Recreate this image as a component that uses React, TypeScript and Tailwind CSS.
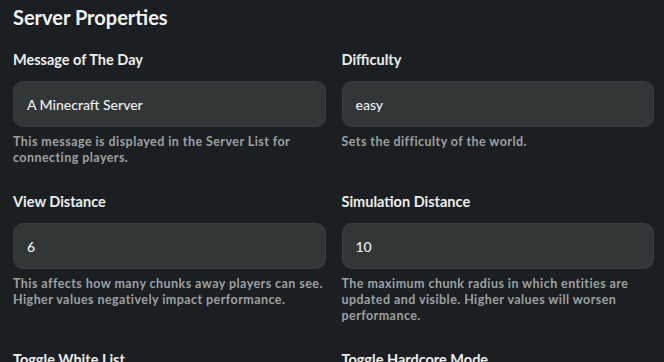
import React from 'react';

interface Field {
    label: string;
    value?: string;
    help?: string;
    toggle?: boolean;
}

const fields: Field[] = [
    { label: 'Message of The Day', value: 'A Minecraft Server', help: 'This message is displayed in the Server List for connecting players.' },
    { label: 'Difficulty', value: 'easy', help: 'Sets the difficulty of the world.' },
    { label: 'View Distance', value: '6', help: 'This affects how many chunks away players can see. Higher values negatively impact performance.' },
    { label: 'Simulation Distance', value: '10', help: 'The maximum chunk radius in which entities are updated and visible. Higher values will worsen performance.' },
    { label: 'Toggle White List', toggle: true, help: 'Only allow players on the white list to join.' },
    { label: 'Toggle Hardcore Mode', toggle: true, help: 'Players are set to spectator mode when they die.' },
];

const PropertyField = ({ field }: { field: Field }) => (
    <div className="flex flex-col">
        <label className="text-[14.5px] leading-5 font-bold text-[#eceeee]">{field.label}</label>
        {field.toggle ? (
            <div className="mt-[11px] w-11 h-6 rounded-full bg-[#313737] border border-[#3b4141]" />
        ) : (
            <div className="mt-[11px] h-[46px] rounded-[10px] bg-[#313737] border border-[#393f3f] flex items-center px-[13px] text-[14px] font-medium text-[#eef0f0]">
                {field.value}
            </div>
        )}
        <p className="mt-[7px] text-[12.5px] leading-4 font-bold tracking-[0.035em] text-[#9ba1a1]">{field.help}</p>
    </div>
);

export default function App() {
    return (
        <div
            className="w-[664px] h-[362px] overflow-hidden bg-[#1b1f21] pl-[13px] pr-[10px]"
            style={{ fontFamily: 'Lato, "Liberation Sans", sans-serif' }}
        >
            <h1 className="pt-[3px] text-[20px] leading-7 font-bold text-[#f2f4f4]">Server Properties</h1>
            <div className="mt-[19px] grid grid-cols-2 gap-x-4 gap-y-[26px]">
                {fields.map(f => <PropertyField key={f.label} field={f} />)}
            </div>
        </div>
    );
}
